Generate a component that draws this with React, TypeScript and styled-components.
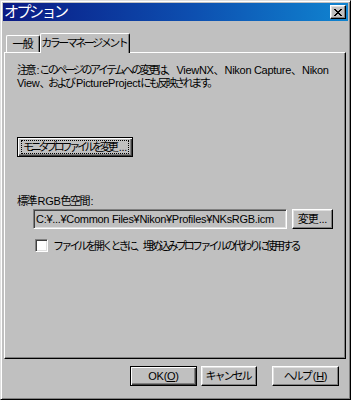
import React from 'react'
import styled, { createGlobalStyle } from 'styled-components'

const GlobalStyle = createGlobalStyle`
  html, body {
    margin: 0;
    padding: 0;
    background: #c0c0c0;
  }
  * {
    box-sizing: border-box;
  }
`

const fontStack = `"Liberation Sans", "Noto Sans CJK JP", sans-serif`

// Japanese runs: Noto CJK is full width, the original UI font is much narrower.
// margin-right gives back the spacing taken after the run's last glyph.
const Ja = styled.span<{ $tight?: number }>`
  letter-spacing: ${(p) => p.$tight ?? -2.5}px;
  margin-right: ${(p) => -(p.$tight ?? -2.5)}px;
`

const Window = styled.div`
  width: 351px;
  height: 400px;
  background: #c0c0c0;
  border: 1px solid;
  border-color: #dfdfdf #000 #000 #dfdfdf;
  box-shadow: inset 1px 1px #fff, inset -1px -1px #808080;
  padding: 2px;
  display: flex;
  flex-direction: column;
  font-family: ${fontStack};
  font-size: 11px;
  letter-spacing: -0.3px;
  color: #000;
`

const TitleBar = styled.div`
  height: 18px;
  display: flex;
  align-items: center;
  justify-content: space-between;
  padding: 0 2px 0 1px;
  background: linear-gradient(90deg, #0a1a84 0%, #0d4fb0 55%, #1084d0 100%);
`

const Title = styled.span`
  color: #fff;
  font-size: 15px;
  line-height: 18px;
`

const CloseButton = styled.div`
  width: 16px;
  height: 14px;
  background: #c0c0c0;
  border: 1px solid;
  border-color: #fff #000 #000 #fff;
  box-shadow: inset -1px -1px #808080, inset 1px 1px #dfdfdf;
  display: flex;
  align-items: center;
  justify-content: center;
`

const Body = styled.div`
  margin: 12px 2px 0 1px;
  display: flex;
  flex-direction: column;
`

const TabStrip = styled.div`
  display: flex;
  align-items: flex-end;
  height: 19px;
  padding-left: 2px;
`

const Tab = styled.div<{ $active?: boolean; $width: number }>`
  position: relative;
  z-index: ${(p) => (p.$active ? 1 : 0)};
  width: ${(p) => p.$width}px;
  height: ${(p) => (p.$active ? 20 : 17)}px;
  margin-bottom: ${(p) => (p.$active ? -1 : 0)}px;
  background: #c0c0c0;
  border-top: 1px solid #fff;
  border-left: 1px solid #fff;
  border-right: 1px solid #000;
  border-radius: 2px 2px 0 0;
  box-shadow: inset -1px 0 #808080;
  display: flex;
  align-items: ${(p) => (p.$active ? 'flex-start' : 'center')};
  justify-content: center;
  padding-top: ${(p) => (p.$active ? 2 : 0)}px;
  line-height: 14px;
  white-space: nowrap;
`

const Panel = styled.div`
  height: 307px;
  border: 1px solid;
  border-color: #fff #000 #000 #fff;
  box-shadow: inset -1px -1px #808080;
  padding: 11px 12px 0 12px;
  display: flex;
  flex-direction: column;
`

const Note = styled.p`
  margin: 0;
  line-height: 13px;
  white-space: nowrap;
`

const Button = styled.div<{ $width: number; $default?: boolean }>`
  width: ${(p) => p.$width}px;
  height: 20px;
  flex-shrink: 0;
  background: #c0c0c0;
  border: 1px solid;
  border-color: ${(p) => (p.$default ? '#000' : '#fff #000 #000 #fff')};
  box-shadow: ${(p) =>
    p.$default
      ? 'inset 1px 1px #fff, inset -1px -1px #404040, inset -2px -2px #808080'
      : 'inset -1px -1px #808080, inset 1px 1px #dfdfdf'};
  display: flex;
  align-items: center;
  justify-content: center;
  white-space: nowrap;
  line-height: 14px;
`

const FocusRing = styled.span`
  width: calc(100% - 6px);
  border: 1px dotted #000;
  line-height: 12px;
  text-align: center;
`

const MonitorRow = styled.div`
  margin-top: 47px;
`

const SectionLabel = styled.div`
  margin-top: 37px;
  line-height: 14px;
`

const PathRow = styled.div`
  display: flex;
  gap: 5px;
  margin: 1px 0 0 16px;
`

const PathField = styled.div`
  width: 255px;
  height: 20px;
  border: 1px solid;
  border-color: #808080 #fff #fff #808080;
  box-shadow: inset 1px 1px #404040, inset -1px -1px #dfdfdf;
  padding: 0 2px;
  display: flex;
  align-items: center;
  white-space: nowrap;
  overflow: hidden;
`

const CheckRow = styled.label`
  display: flex;
  align-items: center;
  gap: 5px;
  margin: 8px 0 0 18px;
  white-space: nowrap;
`

const CheckBox = styled.span`
  flex-shrink: 0;
  width: 13px;
  height: 13px;
  background: #fff;
  border: 1px solid;
  border-color: #808080 #fff #fff #808080;
  box-shadow: inset 1px 1px #404040, inset -1px -1px #dfdfdf;
`

const Footer = styled.div`
  display: flex;
  justify-content: flex-end;
  margin-top: 7px;
  padding-right: 7px;
`

const FooterGap = styled.div<{ $w: number }>`
  width: ${(p) => p.$w}px;
`

const CloseIcon = () => (
  <svg width="8" height="7" viewBox="0 0 8 7" shapeRendering="crispEdges">
    <path
      d="M0 0h2v1h-2zM6 0h2v1h-2zM1 1h2v1h-2zM5 1h2v1h-2zM2 2h4v1h-4zM3 3h2v1h-2zM2 4h4v1h-4zM1 5h2v1h-2zM5 5h2v1h-2zM0 6h2v1h-2zM6 6h2v1h-2z"
      fill="#000"
    />
  </svg>
)

export default function App() {
  return (
    <>
      <GlobalStyle />
      <Window>
        <TitleBar>
          <Title>
            <Ja $tight={-2.5}>オプション</Ja>
          </Title>
          <CloseButton>
            <CloseIcon />
          </CloseButton>
        </TitleBar>
        <Body>
          <TabStrip>
            <Tab $width={34}>
              <Ja $tight={-1}>一般</Ja>
            </Tab>
            <Tab $active $width={90}>
              <Ja>カラーマネージメント</Ja>
            </Tab>
          </TabStrip>
          <Panel>
            <Note>
              <Ja>注意</Ja>:<Ja>このページのアイテムへの変更は、</Ja>ViewNX<Ja>、</Ja>Nikon Capture<Ja>、</Ja>Nikon
              <br />
              View<Ja>、および</Ja>PictureProject<Ja>にも反映されます。</Ja>
            </Note>
            <MonitorRow>
              <Button $width={116} $default>
                <FocusRing>
                  <Ja $tight={-3.3}>モニタプロファイルを変更</Ja>...
                </FocusRing>
              </Button>
            </MonitorRow>
            <SectionLabel>
              <Ja $tight={-1.5}>標準</Ja>RGB<Ja $tight={-1.5}>色空間</Ja>:
            </SectionLabel>
            <PathRow>
              <PathField>C:¥...¥Common Files¥Nikon¥Profiles¥NKsRGB.icm</PathField>
              <Button $width={41}>
                <Ja $tight={-1}>変更</Ja>...
              </Button>
            </PathRow>
            <CheckRow>
              <CheckBox />
              <Ja $tight={-2.8}>ファイルを開くときに、埋め込みプロファイルの代わりに使用する</Ja>
            </CheckRow>
          </Panel>
          <Footer>
            <Button $width={67} $default>
              OK(<u>O</u>)
            </Button>
            <FooterGap $w={4} />
            <Button $width={56}>
              <Ja $tight={-2}>キャンセル</Ja>
            </Button>
            <FooterGap $w={15} />
            <Button $width={67}>
              <Ja $tight={-2}>ヘルプ</Ja>(<u>H</u>)
            </Button>
          </Footer>
        </Body>
      </Window>
    </>
  )
}
